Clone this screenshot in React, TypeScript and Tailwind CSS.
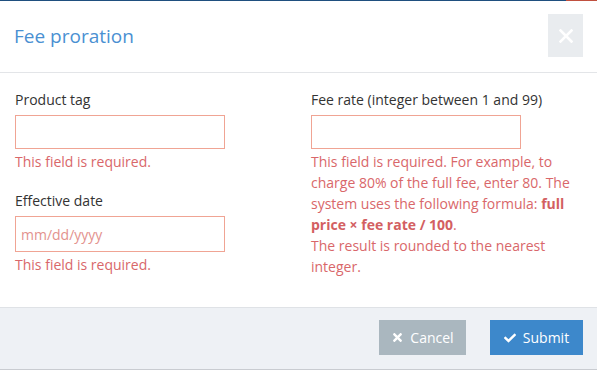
import { FaCheck, FaTimes } from 'react-icons/fa';

export default function App() {
    return (
        <div className="h-[372px] w-[597px] bg-white font-['Open_Sans',sans-serif] text-[14px]">
            {/* верхняя полоска */}
            <div className="flex h-px">
                <div className="flex-1 bg-[#1f4f7f]" />
                <div className="w-[31px] bg-[#c0503f]" />
            </div>

            {/* Шапка */}
            <div className="flex h-[72px] items-start justify-between border-b border-[#e3e5e8] pl-[14px] pr-[14px]">
                <h2 className="mt-[22px] text-[19px] leading-[26px] text-[#4a90d2]">Fee proration</h2>
                <button className="mt-[13px] flex h-[43px] w-[35px] items-center justify-center bg-[#e9ecef] text-white">
                    <svg width="14" height="14" viewBox="0 0 14 14">
                        <path d="M1.5 1.5 L12.5 12.5 M12.5 1.5 L1.5 12.5" stroke="currentColor" strokeWidth="2.6" strokeLinecap="square" />
                    </svg>
                </button>
            </div>

            {/* Тело */}
            <div className="flex h-[234px] pl-[15px] pt-[17px]">
                <div className="w-[296px]">
                    <label className="block leading-[20px] text-[#333]">Product tag</label>
                    <input className="mt-[5px] block h-[34px] w-[210px] border border-[#f0a494] outline-none" />
                    <p className="mt-[2px] leading-[21px] text-[#d9676a]">This field is required.</p>

                    <label className="mt-[19px] block leading-[20px] text-[#333]">Effective date</label>
                    <div className="mt-[5px] flex h-[36px] w-[210px] items-center border border-[#f0a494] pl-[5px] text-[#e3928e]">
                        mm/dd/yyyy
                    </div>
                    <p className="mt-[2px] leading-[21px] text-[#d9676a]">This field is required.</p>
                </div>

                <div className="w-[268px]">
                    <label className="block leading-[20px] text-[#333]">Fee rate (integer between 1 and 99)</label>
                    <input className="mt-[5px] block h-[34px] w-[210px] border border-[#f0a494] outline-none" />
                    <p className="mt-[2px] leading-[21px] text-[#d9676a]">
                        This field is required. For example, to charge 80% of the full fee, enter 80. The
                        system uses the following formula: <b className="text-[#d35f62]">full price × fee rate / 100</b>.
                        <br />
                        The result is rounded to the nearest integer.
                    </p>
                </div>
            </div>

            {/* Подвал */}
            <div className="flex h-[63px] items-start justify-end gap-[24px] border-y border-b-[#c9ccd1] border-t-[#dfe2e6] bg-[#eef1f5] pr-[14px] pt-[12px]">
                <button className="flex h-[35px] w-[87px] items-center justify-center gap-[6px] bg-[#aab7bf] text-white">
                    <FaTimes className="text-[13px]" />
                    Cancel
                </button>
                <button className="flex h-[35px] w-[93px] items-center justify-center gap-[7px] bg-[#3d88cb] text-white">
                    <FaCheck className="text-[12px]" />
                    Submit
                </button>
            </div>
        </div>
    );
}
